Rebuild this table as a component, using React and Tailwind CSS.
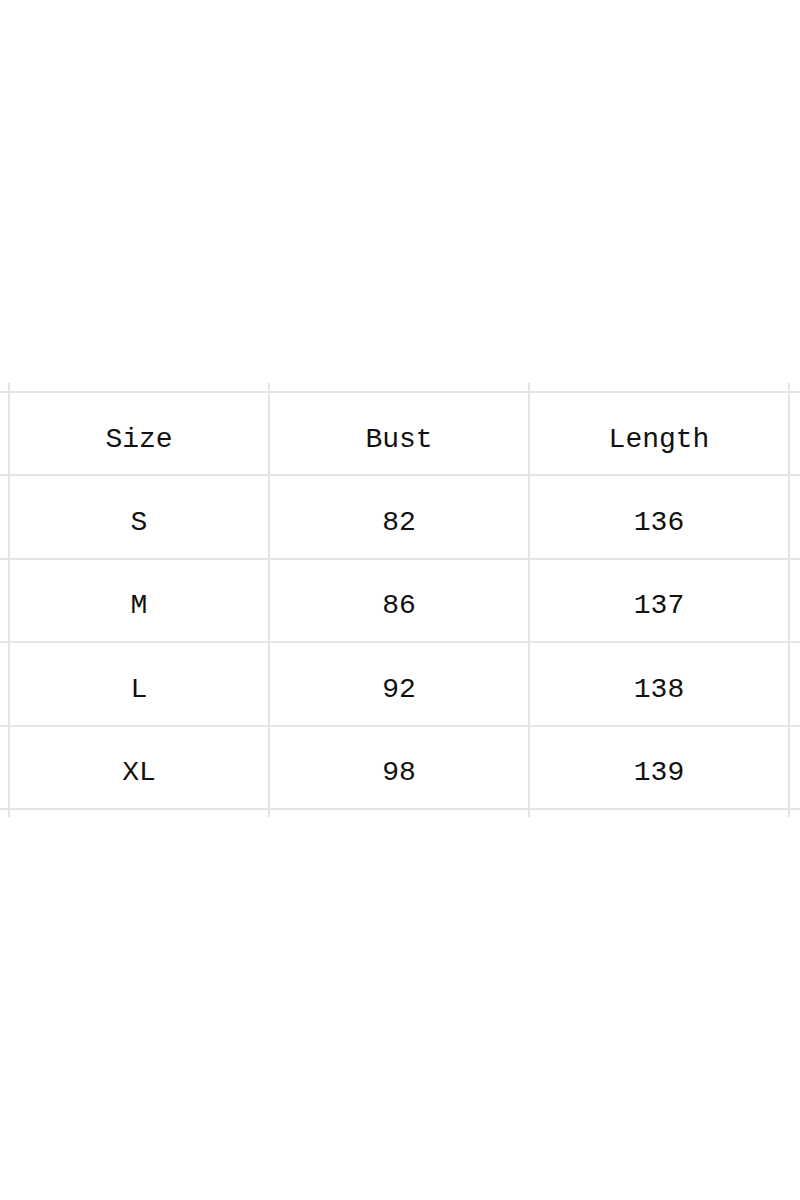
const rows = [
  ["Size", "Bust", "Length"],
  ["S", "82", "136"],
  ["M", "86", "137"],
  ["L", "92", "138"],
  ["XL", "98", "139"],
];

function Row({ cells, first, spacer, height }) {
  return (
    <div
      className={`flex ${spacer ? "" : "border-b-2 border-[#e4e4e4]"} ${first ? "border-t-2" : ""}`}
      style={{ height }}
    >
      <div className="w-[8px] shrink-0" />
      {[0, 1, 2].map((i) => (
        <div
          key={i}
          className={`w-[260px] shrink-0 border-l-2 border-[#e4e4e4] flex items-center justify-center text-[28px] text-[#111] ${spacer ? "" : "pt-[12px]"}`}
        >
          {cells ? cells[i] : null}
        </div>
      ))}
      <div className="flex-1 border-l-2 border-[#e4e4e4]" />
    </div>
  );
}

export default function App() {
  return (
    <div className="w-[800px] h-[1200px] bg-white pt-[383px] font-['Liberation_Mono',monospace]">
      <Row spacer height="8px" />
      {rows.map((r, i) => (
        <Row key={i} cells={r} first={i === 0} height={i === 0 ? "85.4px" : "83.4px"} />
      ))}
      <Row spacer height="7px" />
    </div>
  );
}
